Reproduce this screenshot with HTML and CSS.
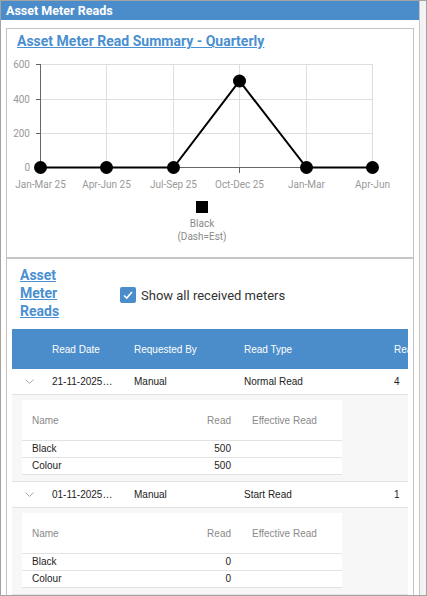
FILE: index.html
```html
<!DOCTYPE html>
<html lang="en">

<head>
  <meta charset="UTF-8">
  <meta name="viewport" content="width=device-width, initial-scale=1.0">
  <title>Asset Meter Reads</title>
  <link rel="stylesheet" href="styles.css">
</head>

<body>
  <div class="frame">
    <div class="panel">
      <div class="panel-header">Asset Meter Reads</div>

      <div class="panel-body">
        <div class="card">

          <!-- quarterly chart -->
          <section class="summary">
            <a class="summary-title" href="#">Asset Meter Read Summary - Quarterly</a>
            <svg class="chart" width="406" height="207" viewBox="0 0 406 207">
              <g stroke="#dedede" stroke-width="1">
                <line x1="33" y1="14.5" x2="365.5" y2="14.5" />
                <line x1="33" y1="49.5" x2="365.5" y2="49.5" />
                <line x1="33" y1="83.5" x2="365.5" y2="83.5" />
                <line x1="99.5" y1="14" x2="99.5" y2="118" />
                <line x1="166.5" y1="14" x2="166.5" y2="118" />
                <line x1="232.5" y1="14" x2="232.5" y2="118" />
                <line x1="299.5" y1="14" x2="299.5" y2="118" />
                <line x1="365.5" y1="14" x2="365.5" y2="118" />
              </g>
              <g stroke="#666" stroke-width="1">
                <line x1="33.5" y1="14" x2="33.5" y2="118" />
                <line x1="33" y1="117.5" x2="366" y2="117.5" />
                <line x1="29" y1="14.5" x2="33" y2="14.5" />
                <line x1="29" y1="49.5" x2="33" y2="49.5" />
                <line x1="29" y1="83.5" x2="33" y2="83.5" />
                <line x1="29" y1="117.5" x2="33" y2="117.5" />
                <line x1="99.5" y1="118" x2="99.5" y2="123" />
                <line x1="166.5" y1="118" x2="166.5" y2="123" />
                <line x1="232.5" y1="118" x2="232.5" y2="123" />
                <line x1="299.5" y1="118" x2="299.5" y2="123" />
                <line x1="365.5" y1="118" x2="365.5" y2="123" />
              </g>
              <g class="axis-label" text-anchor="end">
                <text x="23" y="18">600</text>
                <text x="23" y="53">400</text>
                <text x="23" y="87">200</text>
                <text x="23" y="121">0</text>
              </g>
              <g class="axis-label" text-anchor="middle">
                <text x="33.5" y="137.5">Jan-Mar 25</text>
                <text x="99.5" y="137.5">Apr-Jun 25</text>
                <text x="166.5" y="137.5">Jul-Sep 25</text>
                <text x="232.5" y="137.5">Oct-Dec 25</text>
                <text x="299.5" y="137.5">Jan-Mar</text>
                <text x="365.5" y="137.5">Apr-Jun</text>
              </g>
              <polyline points="33.5,117.5 99.5,117.5 166.5,117.5 232.5,31 299.5,117.5 365.5,117.5" fill="none" stroke="#000" stroke-width="2" />
              <g fill="#000">
                <circle cx="33.5" cy="117.5" r="6.5" />
                <circle cx="99.5" cy="117.5" r="6.5" />
                <circle cx="166.5" cy="117.5" r="6.5" />
                <circle cx="232.5" cy="31" r="6.5" />
                <circle cx="299.5" cy="117.5" r="6.5" />
                <circle cx="365.5" cy="117.5" r="6.5" />
              </g>
              <rect x="189" y="151" width="12" height="12" fill="#000" />
              <g class="legend-label" text-anchor="middle">
                <text x="195" y="177">Black</text>
                <text x="195" y="189.5">(Dash=Est)</text>
              </g>
            </svg>
          </section>

          <!-- reads list -->
          <section class="reads">
            <div class="reads-toolbar">
              <a class="reads-title" href="#">Asset Meter Reads</a>
              <label class="check">
                <span class="check-box">
                  <svg width="12" height="12" viewBox="0 0 12 12">
                    <polyline points="2,6.5 4.8,9 10,3" fill="none" stroke="#fff" stroke-width="1.6" />
                  </svg>
                </span>
                Show all received meters
              </label>
            </div>

            <div class="grid">
              <div class="grid-head">
                <span></span>
                <span>Read Date</span>
                <span>Requested By</span>
                <span>Read Type</span>
                <span>Reads</span>
              </div>

              <div class="grid-row">
                <span class="chevron"><svg width="9" height="6" viewBox="0 0 9 6"><polyline points="0.5,0.5 4.5,4.5 8.5,0.5" fill="none" stroke="#aaa" stroke-width="1" /></svg></span>
                <span class="date">21-11-2025 09:14</span>
                <span>Manual</span>
                <span>Normal Read</span>
                <span>4</span>
              </div>
              <div class="detail">
                <table class="meters">
                  <thead>
                    <tr><th class="c-name">Name</th><th class="c-read">Read</th><th class="c-eff">Effective Read</th></tr>
                  </thead>
                  <tbody>
                    <tr><td>Black</td><td class="c-read">500</td><td></td></tr>
                    <tr><td>Colour</td><td class="c-read">500</td><td></td></tr>
                  </tbody>
                </table>
              </div>

              <div class="grid-row">
                <span class="chevron"><svg width="9" height="6" viewBox="0 0 9 6"><polyline points="0.5,0.5 4.5,4.5 8.5,0.5" fill="none" stroke="#aaa" stroke-width="1" /></svg></span>
                <span class="date">01-11-2025 08:30</span>
                <span>Manual</span>
                <span>Start Read</span>
                <span>1</span>
              </div>
              <div class="detail">
                <table class="meters">
                  <thead>
                    <tr><th class="c-name">Name</th><th class="c-read">Read</th><th class="c-eff">Effective Read</th></tr>
                  </thead>
                  <tbody>
                    <tr><td>Black</td><td class="c-read">0</td><td></td></tr>
                    <tr><td>Colour</td><td class="c-read">0</td><td></td></tr>
                  </tbody>
                </table>
              </div>
            </div>
          </section>

        </div>
      </div>
    </div>
    <div class="scroll-track"></div>
  </div>
</body>

</html>
```

FILE: styles.css
```css
body {
  margin: 0;
  padding: 0;
  font-family: Roboto, 'Liberation Sans', sans-serif;
  background: #fff;
}

.frame {
  width: 427px;
  height: 596px;
  box-sizing: border-box;
  border: 1px solid #a3a3a3;
  display: flex;
  overflow: hidden;
  background: #fff;
}

.panel {
  width: 419px;
  flex: none;
  box-sizing: border-box;
  border-right: 1px solid #c6c6c6;
}

.scroll-track {
  flex: 1;
  background: #f3f3f3;
}

.panel-header {
  height: 19px;
  line-height: 19px;
  padding-left: 5px;
  background-color: #4b8dcb;
  color: #fff;
  font-weight: bold;
  font-size: 12.5px;
}

.panel-body {
  padding: 8px 5px 0;
}

.card {
  border: 1px solid #c3c3c3;
}

/* chart part */
.summary {
  padding-top: 4px;
}

.summary-title {
  display: block;
  width: fit-content;
  margin-left: 10px;
  line-height: 17px;
  font-size: 14px;
  font-weight: bold;
  color: #4a8fd0;
}

.chart {
  display: block;
}

.axis-label {
  font-family: Roboto, sans-serif;
  font-size: 10px;
  fill: #999;
}

.legend-label {
  font-family: Roboto, sans-serif;
  font-size: 10px;
  fill: #8a8a8a;
}

/* reads list */
.reads {
  border-top: 2px solid #c6c6c6;
  padding: 7px 5px 0;
}

.reads-toolbar {
  display: flex;
  align-items: center;
  padding-left: 8px;
}

.reads-title {
  display: block;
  width: 50px;
  margin-right: 50px;
  line-height: 18px;
  font-size: 14px;
  font-weight: bold;
  color: #4a8fd0;
}

.check {
  display: flex;
  align-items: center;
  gap: 5px;
  padding-top: 4px;
  font-size: 13px;
  color: #333;
}

.check-box {
  width: 16px;
  height: 16px;
  border-radius: 2px;
  background-color: #4b8dcb;
  display: flex;
  align-items: center;
  justify-content: center;
}

.check-box svg {
  display: block;
}

.grid {
  margin-top: 9px;
  overflow: hidden;
  font-family: 'Liberation Sans', Arial, sans-serif;
  font-size: 10px;
}

.grid-head,
.grid-row {
  display: grid;
  grid-template-columns: 40px 82px 110px 150px 14px;
  align-items: center;
  white-space: nowrap;
}

.grid-head span,
.grid-row span {
  overflow: hidden;
}

.grid-head {
  height: 40px;
  background-color: #4b8dcb;
  color: #fff;
}

.grid-row {
  height: 25px;
  border-bottom: 1px solid #e2e2e2;
  color: #222;
}

.grid-row .chevron {
  padding-left: 13px;
  display: flex;
}

.grid-row .date {
  width: 62px;
  text-overflow: ellipsis;
}

.detail {
  background-color: #f7f7f7;
  padding: 5px 0 6px 10px;
  border-bottom: 1px solid #e2e2e2;
}

.meters {
  width: 320px;
  border-collapse: collapse;
  background: #fff;
  font-size: 10px;
  table-layout: fixed;
}

.meters th {
  height: 40px;
  padding: 0 0 0 10px;
  font-weight: normal;
  text-align: left;
  color: #8a8a8a;
  border-bottom: 1px solid #e2e2e2;
}

.meters td {
  height: 16px;
  line-height: 16px;
  padding: 0 0 0 10px;
  color: #222;
  border-bottom: 1px solid #e2e2e2;
}

.meters .c-name {
  width: 140px;
}

.meters .c-read {
  width: 49px;
  padding-right: 11px;
  text-align: right;
}

.meters .c-eff {
  width: 90px;
}
```
